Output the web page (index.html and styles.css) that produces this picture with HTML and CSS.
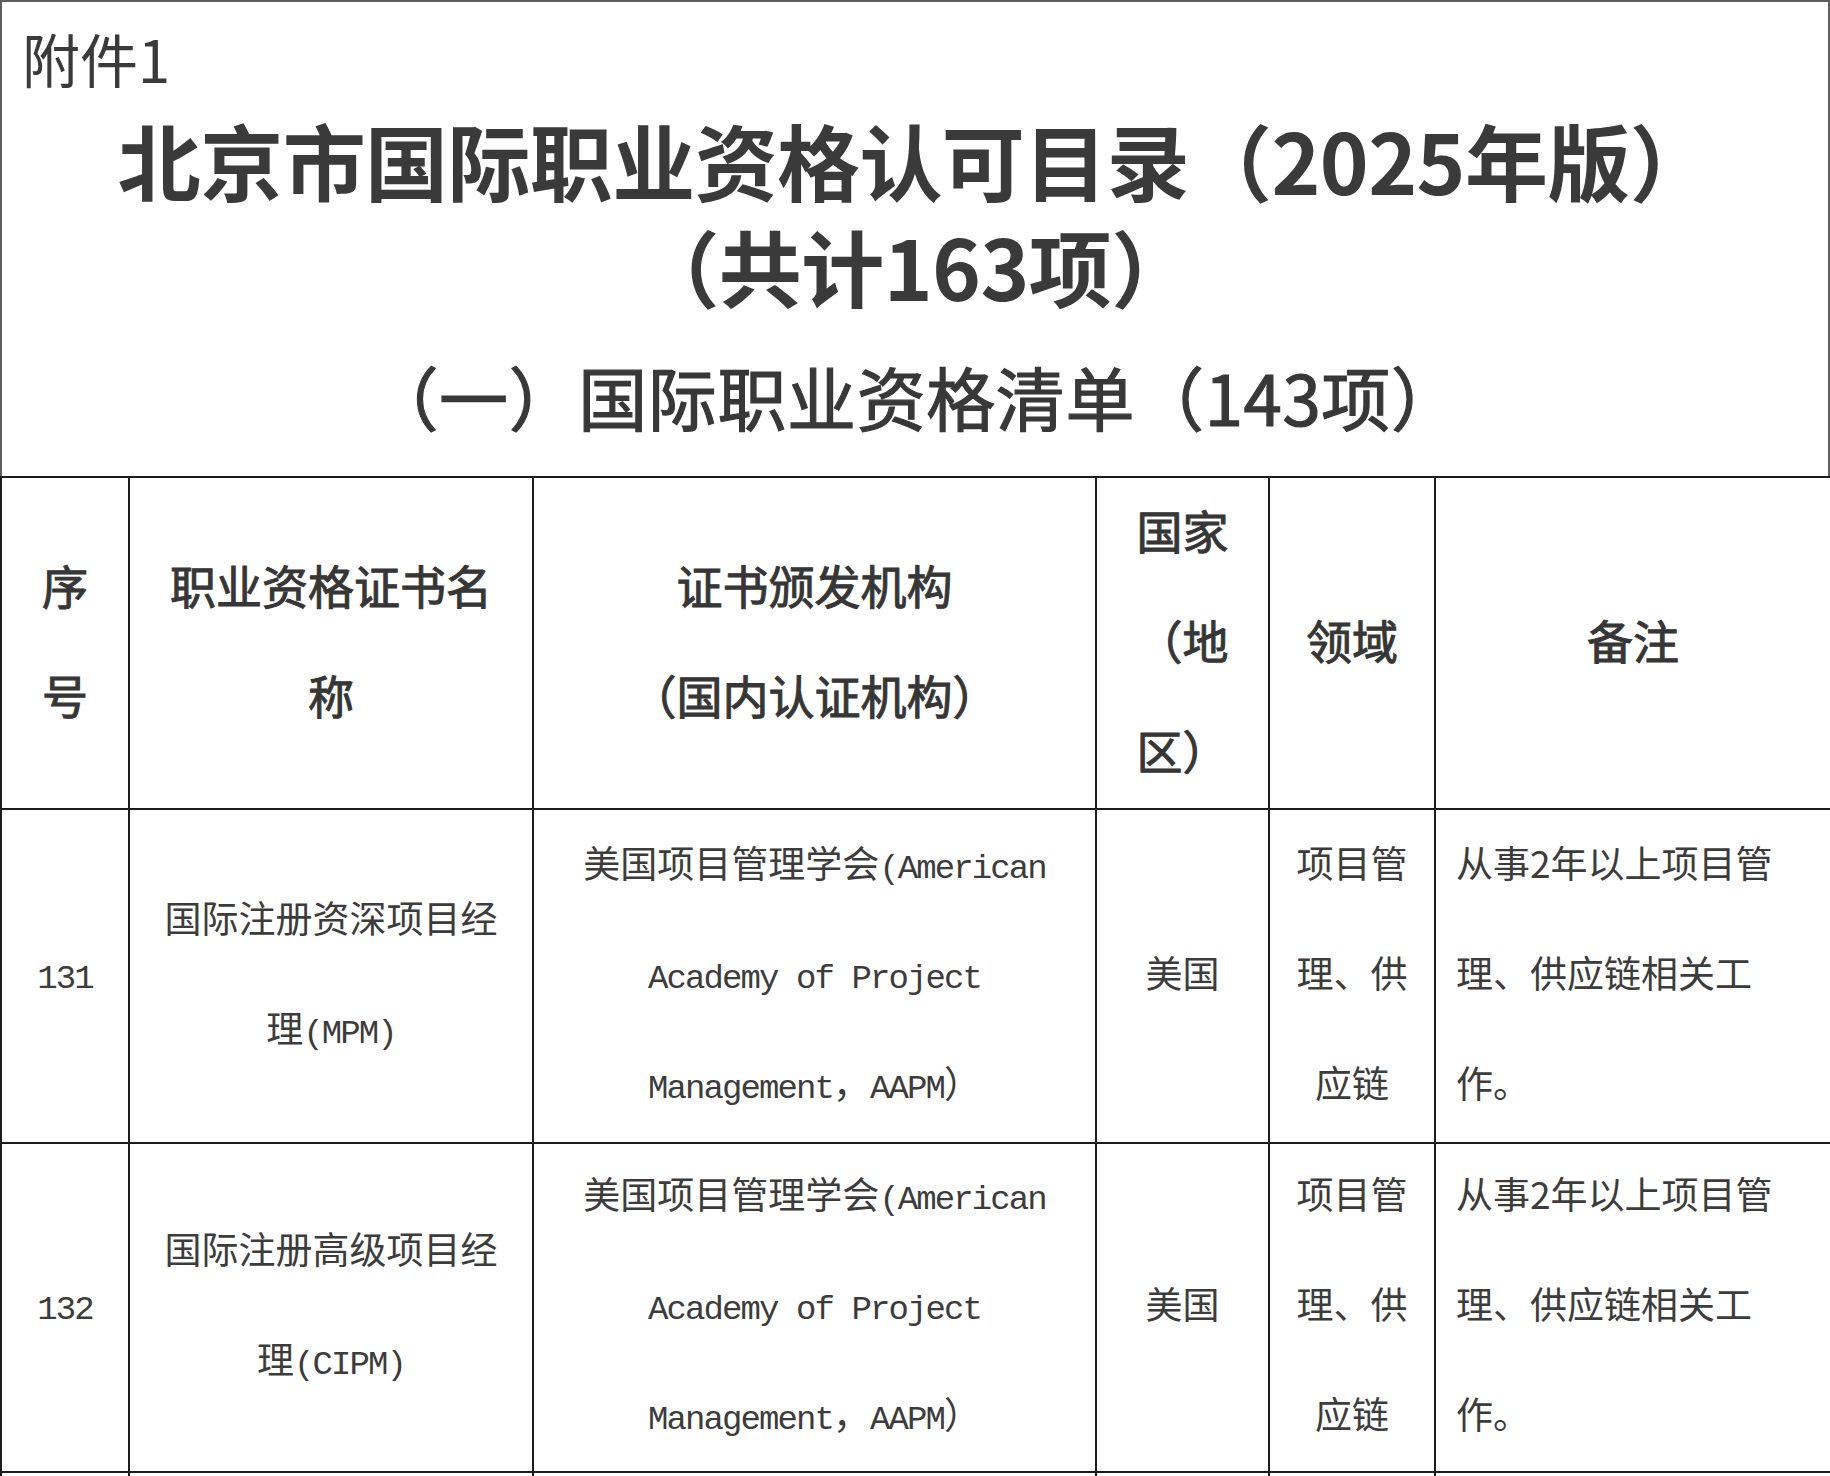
FILE: index.html
```html
<!DOCTYPE html>
<html lang="zh-CN">
<head>
<meta charset="utf-8">
<title>北京市国际职业资格认可目录（2025年版）</title>
<link rel="stylesheet" href="styles.css">
</head>
<body>
<div class="page">
  <header class="head">
    <p class="annex">附件1</p>
    <h1 class="title"><span class="tl">北京市国际职业资格认可目录（2025年版）</span><span class="tl">（共计163项）</span></h1>
    <h2 class="sub">（一）国际职业资格清单（143项）</h2>
  </header>
  <table class="list">
    <colgroup>
      <col class="c1"><col class="c2"><col class="c3"><col class="c4"><col class="c5"><col class="c6">
    </colgroup>
    <thead>
      <tr>
        <th><div class="in">序<br>号</div></th>
        <th><div class="in">职业资格证书名<br>称</div></th>
        <th><div class="in">证书颁发机构<br>（国内认证机构）</div></th>
        <th><div class="in">国家<br>（地<br>区）</div></th>
        <th><div class="in">领域</div></th>
        <th><div class="in">备注</div></th>
      </tr>
    </thead>
    <tbody>
      <tr class="r1">
        <td><div class="in"><span class="lat">131</span></div></td>
        <td><div class="in">国际注册资深项目经<br>理<span class="lat">(MPM)</span></div></td>
        <td><div class="in">美国项目管理学会<span class="lat">(American</span><br><span class="lat">Academy of Project</span><br><span class="lat">Management</span>，<span class="lat">AAPM</span>）</div></td>
        <td><div class="in">美国</div></td>
        <td><div class="in">项目管<br>理、供<br>应链</div></td>
        <td class="note"><div class="in">从事2年以上项目管<br>理、供应链相关工<br>作。</div></td>
      </tr>
      <tr class="r2">
        <td><div class="in"><span class="lat">132</span></div></td>
        <td><div class="in">国际注册高级项目经<br>理<span class="lat">(CIPM)</span></div></td>
        <td><div class="in">美国项目管理学会<span class="lat">(American</span><br><span class="lat">Academy of Project</span><br><span class="lat">Management</span>，<span class="lat">AAPM</span>）</div></td>
        <td><div class="in">美国</div></td>
        <td><div class="in">项目管<br>理、供<br>应链</div></td>
        <td class="note"><div class="in">从事2年以上项目管<br>理、供应链相关工<br>作。</div></td>
      </tr>
      <tr class="r3">
        <td></td><td></td><td></td><td></td><td></td><td></td>
      </tr>
    </tbody>
  </table>
</div>
</body>
</html>
```

FILE: styles.css
```css
html, body {
  margin: 0;
  padding: 0;
  background: #ffffff;
}

.page {
  width: 1830px;
  height: 1476px;
  overflow: hidden;
  font-family: "Noto Sans CJK SC", "Noto Sans", sans-serif;
  color: #333333;
}

.head {
  border: 2px solid #5e5e5e;
  border-bottom: none;
  padding: 21px 0 40px;
}

.annex {
  margin: 0;
  padding-left: 20px;
  font-size: 58px;
  line-height: 70px;
  font-weight: 400;
  color: #3a3a3a;
}

.title {
  margin: 13px 0 0;
  text-align: center;
  font-size: 83px;
  line-height: 106px;
  font-weight: 700;
  letter-spacing: -0.6px;
  color: #3a3a3a;
}

.tl {
  display: block;
  height: 106px;
}

.sub {
  margin: 38px 0 0;
  text-align: center;
  font-size: 69px;
  line-height: 80px;
  font-weight: 400;
  letter-spacing: 0.6px;
  color: #383838;
  -webkit-text-stroke: 1.2px #383838;
}

.list {
  width: 1830px;
  table-layout: fixed;
  border-collapse: collapse;
}

.c1 { width: 128px; }
.c2 { width: 404px; }
.c3 { width: 563px; }
.c4 { width: 173px; }
.c5 { width: 166px; }
.c6 { width: 396px; }

.list th,
.list td {
  border: 2px solid #1c1c1c;
  padding: 0;
  text-align: center;
  vertical-align: middle;
  line-height: 110px;
}

.in {
  margin-top: -9px;
}

.list th {
  height: 330px;
  font-size: 46px;
  font-weight: 400;
  color: #363636;
  -webkit-text-stroke: 1px #363636;
}

.list td {
  font-size: 37px;
  font-weight: 400;
  color: #3c3c3c;
}

.list td.note {
  text-align: left;
  padding-left: 20px;
}

.lat {
  font-family: "Liberation Mono", monospace;
  font-size: 34px;
  letter-spacing: -1.9px;
  line-height: 1;
}

.r1 td { height: 332px; }
.r2 td { height: 327px; }
.r3 td { height: 40px; }
```
